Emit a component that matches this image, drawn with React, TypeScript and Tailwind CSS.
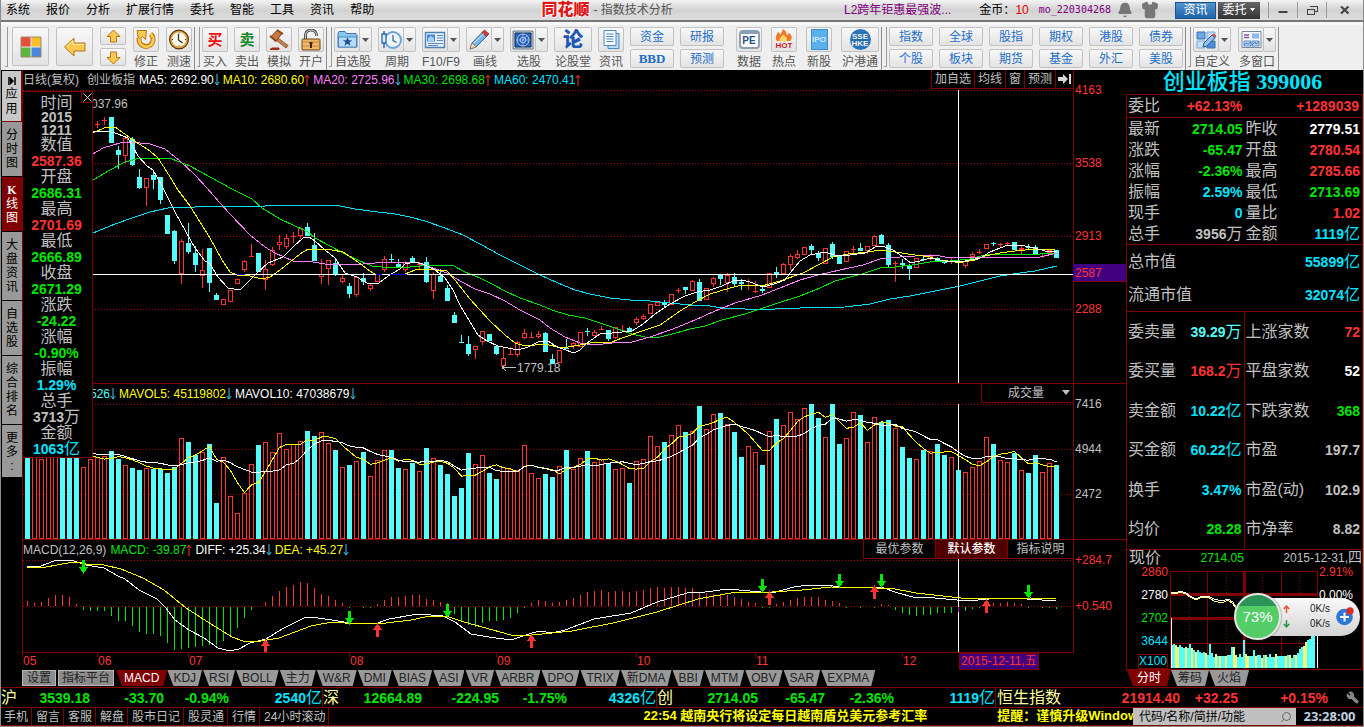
import React from "react";
import { Bell, Shirt, Wrench, Search } from "lucide-react";

const UP = "#ff3232";
const DOWN = "#54fcfc";
const GRID = "#a80000";

const STEP = 7;
const ORIGIN = 27.5;
const barX = (i: number) => ORIGIN + STEP * i;

type Candle = [number, number, number, number, number];

const FIRST_CANDLE = 10;
// rising flag, high, low, body top, body bottom
const candles: Candle[] = [
  [1, 121, 128, 124, 124], [1, 117, 125, 120, 120], [0, 117, 143, 117, 143], [0, 146, 169, 150, 155],
  [1, 137, 163, 138, 156], [0, 137, 166, 139, 165], [0, 169, 189, 177, 188], [1, 178, 206, 178, 188],
  [0, 170, 189, 175, 180], [0, 177, 204, 177, 200], [0, 215, 234, 215, 234], [0, 230, 264, 231, 261],
  [1, 239, 284, 241, 274], [0, 223, 254, 243, 252], [0, 246, 272, 253, 265], [1, 249, 288, 270, 276],
  [0, 248, 292, 248, 283], [0, 293, 300, 295, 300], [1, 299, 305, 299, 305], [1, 290, 302, 290, 302],
  [1, 279, 284, 279, 284], [1, 260, 272, 261, 270], [1, 244, 257, 256, 256], [0, 253, 272, 253, 272],
  [1, 260, 290, 269, 280], [1, 247, 266, 250, 265], [1, 235, 250, 242, 245], [1, 234, 249, 238, 247],
  [1, 232, 243, 236, 236], [1, 227, 239, 228, 236], [0, 223, 236, 227, 236], [0, 233, 261, 245, 261],
  [1, 259, 284, 274, 277], [1, 260, 285, 260, 269], [0, 258, 276, 263, 275], [1, 275, 283, 278, 282],
  [0, 283, 298, 286, 294], [1, 277, 297, 277, 295], [0, 273, 285, 278, 282], [1, 283, 291, 285, 289],
  [1, 274, 282, 274, 282], [1, 256, 272, 259, 270], [0, 254, 262, 259, 259], [0, 259, 268, 264, 267],
  [1, 261, 272, 262, 270], [0, 256, 263, 258, 262], [1, 262, 270, 264, 264], [0, 257, 283, 262, 282],
  [1, 272, 299, 274, 291], [0, 269, 282, 276, 282], [0, 285, 301, 288, 301], [0, 312, 323, 315, 323],
  [0, 335, 343, 342, 342], [0, 336, 356, 344, 354], [1, 346, 359, 346, 350], [1, 331, 345, 331, 342],
  [0, 334, 341, 334, 341], [0, 346, 355, 346, 354], [1, 347, 366, 358, 366], [1, 347, 354, 354, 354],
  [1, 341, 357, 342, 355], [1, 329, 339, 333, 338], [1, 332, 338, 337, 337], [1, 331, 338, 334, 337],
  [0, 332, 352, 333, 352], [0, 354, 364, 359, 364], [1, 350, 363, 350, 363], [0, 339, 349, 348, 348],
  [1, 342, 349, 343, 346], [1, 332, 347, 332, 347], [0, 328, 336, 331, 331], [1, 330, 336, 332, 336],
  [1, 326, 330, 329, 329], [0, 330, 341, 330, 339], [1, 327, 339, 327, 338], [1, 325, 331, 330, 330],
  [0, 327, 332, 328, 332], [1, 317, 325, 319, 323], [1, 314, 320, 316, 319], [1, 304, 314, 304, 314],
  [1, 302, 306, 302, 306], [0, 300, 307, 303, 305], [1, 294, 305, 294, 305], [1, 288, 293, 290, 290],
  [0, 287, 294, 287, 290], [1, 280, 291, 281, 291], [0, 279, 301, 282, 301], [1, 288, 300, 288, 300],
  [1, 277, 287, 278, 284], [0, 275, 285, 275, 279], [1, 273, 292, 275, 283], [0, 273, 286, 277, 284],
  [0, 279, 290, 282, 284], [1, 279, 290, 285, 285], [1, 281, 293, 291, 291], [0, 287, 293, 289, 291],
  [1, 273, 288, 273, 288], [0, 267, 278, 272, 274], [1, 263, 274, 264, 274], [1, 254, 270, 256, 265],
  [1, 250, 259, 254, 258], [1, 247, 255, 247, 255], [0, 244, 254, 246, 250], [0, 251, 261, 253, 258],
  [1, 248, 264, 248, 264], [0, 242, 259, 244, 257], [0, 255, 264, 256, 264], [1, 251, 262, 251, 262],
  [1, 246, 254, 249, 249], [0, 243, 251, 248, 251], [1, 246, 254, 246, 251], [1, 235, 246, 236, 246],
  [0, 234, 244, 235, 244], [0, 243, 267, 245, 265], [1, 261, 282, 263, 263], [0, 259, 269, 263, 265],
  [0, 264, 280, 266, 269], [1, 258, 268, 258, 268], [0, 256, 261, 259, 259], [1, 254, 260, 256, 259],
  [0, 257, 261, 258, 261], [0, 260, 264, 261, 263], [1, 257, 264, 261, 261], [0, 258, 264, 261, 261],
  [1, 261, 268, 261, 266], [1, 252, 257, 254, 257], [1, 249, 254, 252, 252], [1, 244, 249, 244, 249],
  [0, 242, 246, 243, 243], [1, 243, 247, 244, 244], [1, 242, 246, 243, 243], [0, 242, 250, 242, 250],
  [1, 246, 254, 248, 250], [0, 244, 249, 247, 247], [0, 245, 254, 247, 254], [1, 254, 258, 256, 256],
  [1, 250, 253, 250, 253], [0, 250, 258, 250, 258],
];

const priceLines = [
  { stroke: "#00e5ff", points: "93,233 115,224 135,217 150,212 168,208 195,207 215,206 245,207 265,206 295,205 315,205 340,206 355,209 370,211 395,214 410,217 425,221 445,228 463,235 480,244 500,255 520,265 540,275 558,283 575,290 590,294 610,298 630,300 650,301 670,303 690,305 710,306 722,308 745,309 775,309 800,308 845,307 870,304 890,299 910,296 935,291 960,286 980,281 1000,276 1020,273 1035,271 1057,266" },
  { stroke: "#00e600", points: "93,180 110,170 125,162 140,158 155,158 172,159 190,166 210,177 232,189 252,199 262,208 280,219 308,232 315,238 330,246 345,254 360,261 372,266 382,267 410,267 430,265 452,265 465,272 480,278 492,284 505,291 520,298 540,305 552,310 568,315 585,318 600,323 618,329 632,334 645,337 660,337 676,333 690,329 705,326 722,320 745,314 760,309 775,304 800,296 820,288 835,281 850,277 862,274 880,268 895,267 912,265 930,262 950,261 970,259 985,255 1020,254 1040,254 1057,253" },
  { stroke: "#ff80ff", points: "93,154 103,148 120,143 130,142 150,144 165,149 180,161 195,175 207,188 220,203 230,214 250,235 265,247 275,253 293,261 313,262 325,264 352,265 375,263 393,262 415,262 427,266 447,273 460,281 475,289 490,294 505,301 520,310 540,320 550,328 565,337 580,343 595,345 612,343 632,342 650,337 673,329 695,320 715,311 735,303 762,295 780,288 800,280 818,275 840,270 863,265 880,259 900,257 915,256 935,255 945,257 985,257 1010,257 1040,257 1057,253" },
  { stroke: "#ffff00", points: "93,133 106,127 115,127 133,140 150,151 158,158 167,172 178,190 190,206 200,222 210,238 222,260 230,272 237,275 250,276 262,279 270,277 280,270 290,262 300,254 308,249 332,250 343,252 355,260 370,271 376,275 405,274 415,270 423,269 447,271 455,280 470,299 490,321 505,335 515,343 525,346 545,344 562,348 580,345 590,343 612,342 622,338 645,330 660,325 670,318 680,311 695,302 710,294 730,288 742,285 762,286 780,281 803,273 820,264 833,257 848,254 868,252 880,250 895,252 915,255 930,257 940,260 955,262 963,262 975,260 985,256 1000,253 1015,251 1035,249 1055,249" },
  { stroke: "#ffffff", points: "93,131 108,131 118,134 128,138 138,156 147,166 153,170 162,186 175,212 185,230 195,248 205,261 210,264 218,277 228,288 240,290 247,283 257,273 268,263 283,257 294,246 303,238 309,237 315,241 325,250 335,258 345,273 357,277 367,283 379,283 388,276 400,269 405,264 415,262 423,264 435,270 445,278 453,290 460,305 470,322 478,335 487,341 498,346 508,348 518,350 528,347 540,341 548,341 557,347 563,349 574,353 580,350 587,343 600,334 612,333 632,331 643,324 655,314 670,304 685,296 697,292 710,290 722,286 733,281 742,280 750,282 763,287 774,284 785,280 790,273 800,261 810,255 825,252 838,256 850,255 865,253 877,246 882,246 893,250 903,257 911,263 920,261 930,258 945,261 960,262 970,260 980,258 990,252 1000,248 1008,245 1020,245 1035,248 1045,251 1057,252" },
];

// distance of each bar top below the panel's upper edge, in thirds of a unit
const volumeTops = [
  200, 215, 238, 215, 200, 195, 205, 225, 262, 238, 232, 229, 213, 237, 256, 264, 270, 265, 266, 268, 279, 260, 175, 186,
  225, 217, 192, 369, 232, 349, 400, 338, 253, 195, 187, 217, 160, 208, 193, 184, 153, 168, 157, 190, 210, 262, 255, 244,
  216, 289, 241, 211, 210, 264, 268, 249, 274, 204, 235, 255, 282, 348, 324, 219, 253, 226, 279, 297, 262, 268, 271, 196,
  280, 295, 282, 291, 259, 210, 268, 235, 213, 247, 238, 250, 268, 265, 309, 244, 238, 169, 199, 186, 166, 136, 156, 154,
  78, 148, 103, 99, 133, 156, 231, 199, 217, 255, 154, 117, 136, 97, 118, 85, 72, 114, 172, 72, 192, 175, 97, 105, 187,
  112, 126, 120, 145, 201, 234, 238, 210, 214, 192, 225, 232, 270, 277, 262, 244, 172, 192, 241, 247, 219, 271, 279, 225,
  277, 250, 255,
];
const fallingVolume = new Set([
  0, 5, 6, 7, 12, 13, 15, 16, 18, 19, 20, 21, 23, 24, 26, 27, 33, 40, 41, 44, 46, 48, 52, 53, 55, 57, 59, 60, 61, 62, 63,
  66, 67, 74, 75, 77, 80, 83, 86, 91, 94, 96, 99, 101, 102, 105, 107, 112, 113, 115, 116, 119, 122, 123, 125, 126, 128,
  130, 131, 133, 138, 141, 143, 144, 147,
]);

const volumeY = (v: number) => 380 + Math.round(v / 3);

function movingAverage(values: number[], span: number, from: number) {
  return values
    .map((_, i) => i)
    .filter((i) => i >= from)
    .map((i) => {
      const part = values.slice(i - span + 1, i + 1);
      const mean = part.reduce((a, b) => a + b, 0) / span;
      return `${barX(i)},${380 + mean / 3}`;
    })
    .join(" ");
}

const macdTips = [
  184, 189, 186, 173, 166, 166, 171, 192, 210, 212, 212, 212, 228, 243, 243, 258, 276, 282, 282, 288, 308, 330, 328, 324,
  321, 318, 314, 314, 303, 285, 263, 234, 210, 202, 186, 168, 153, 141, 136, 126, 129, 144, 162, 168, 180, 189, 204, 202,
  204, 204, 192, 180, 171, 170, 169, 166, 166, 177, 181, 186, 190, 222, 243, 256, 262, 249, 243, 243, 240, 234, 218, 204,
  189, 179, 183, 189, 185, 180, 174, 165, 156, 154, 151, 156, 154, 154, 156, 154, 150, 144, 141, 145, 141, 141, 144, 145,
  159, 160, 162, 162, 165, 172, 178, 186, 190, 203, 203, 192, 186, 180, 174, 171, 171, 172, 180, 183, 190, 203, 202, 203,
  202, 203, 192, 195, 210, 219, 225, 228, 224, 224, 219, 219, 219, 216, 212, 207, 204, 190, 190, 188, 186, 190, 193, 203,
  202, 203, 203, 208,
];

const diffLine =
  "27,567 41,566 54,561 71,560 86,565 104,568 118,576 125,579 139,590 157,599 166,608 175,620 189,630 204,638 218,648 230,651 239,649 250,643 266,639 282,629 304,618 311,617 332,620 350,623 375,624 389,619 418,614 443,616 455,622 471,634 489,637 511,640 529,634 539,631 552,633 565,630 594,619 631,613 657,602 687,593 705,592 728,589 761,592 776,592 794,587 809,585 827,585 839,587 881,587 898,593 913,597 935,598 957,600 966,601 1001,598 1027,599 1056,601";
const deaLine =
  "27,567 46,567 68,563 77,562 86,564 104,565 121,569 143,578 164,590 186,608 211,624 232,637 243,641 261,641 279,638 311,626 332,622 357,624 386,623 411,620 425,617 446,616 464,622 511,635 532,635 552,633 572,631 613,623 657,612 698,599 731,593 772,592 802,590 831,587 876,588 890,588 916,593 961,598 983,599 1031,598 1056,599";

const sellMarks = [[83, 560], [349, 611], [447, 604], [762, 579], [839, 574], [881, 574], [1028, 585]];
const buyMarks = [[265, 639], [377, 623], [531, 634], [769, 591], [874, 585], [986, 599]];

function Trend({ up }: { up?: boolean }) {
  return up ? (
    <svg className="mr-[3px] h-3 w-1.5 shrink-0" viewBox="0 0 6 12" stroke="#ff3232" fill="none">
      <path d="M3 12V1.500M.8 4L3 1.200L5.200 4" />
    </svg>
  ) : (
    <svg className="mr-[3px] h-3 w-1.5 shrink-0" viewBox="0 0 6 12" stroke="#3cc8f0" fill="none">
      <path d="M3 0V10.500M.8 8L3 11L5.200 8" />
    </svg>
  );
}

function PriceChart() {
  return (
    <svg className="block h-[293px] w-full" viewBox="23 90 1050 293" preserveAspectRatio="none" shapeRendering="crispEdges">
      {[90.5, 163.5, 236.5, 309.5].map((y) => (
        <line key={y} x1="23" x2="1073" y1={y} y2={y} stroke={GRID} strokeDasharray="1 2" />
      ))}
      {candles.map(([rise, high, low, top, bottom], k) => {
        const x = barX(k + FIRST_CANDLE);
        const color = rise ? UP : DOWN;
        return (
          <g key={k} stroke={color}>
            <line x1={x} x2={x} y1={high} y2={low} />
            {top === bottom ? (
              <line x1={x - 2.5} x2={x + 2.5} y1={top + 0.5} y2={top + 0.5} />
            ) : rise ? (
              <rect x={x - 2} y={top + 0.5} width="4" height={bottom - top - 1} fill="#000" />
            ) : (
              <rect x={x - 2.5} y={top} width="5" height={bottom - top} fill={color} stroke="none" />
            )}
          </g>
        );
      })}
      {priceLines.map((l) => (
        <polyline key={l.stroke} points={l.points} fill="none" stroke={l.stroke} />
      ))}
      <path d="M93 274.500H1073M958.500 90V383" stroke="#fff" />
      <path d="M237 274.500H245M376 274.500H382M390 274.500H407" stroke="#0000ff" />
      <path d="M502 367.500H516M502 367.500l4 -3M502 367.500l4 3" stroke="#c0c0c0" fill="none" />
    </svg>
  );
}

function VolumeChart() {
  return (
    <svg className="block h-[135px] w-full" viewBox="23 404 1050 135" preserveAspectRatio="none" shapeRendering="crispEdges">
      {[404.5, 449.5, 494.5].map((y) => (
        <line key={y} x1="23" x2="1073" y1={y} y2={y} stroke={GRID} strokeDasharray="1 2" />
      ))}
      <line x1="958.5" x2="958.5" y1="404" y2="470" stroke="#fff" />
      {volumeTops.map((v, i) => {
        const y = volumeY(v);
        return fallingVolume.has(i) ? (
          <rect key={i} x={barX(i) - 2.5} y={y} width="5" height={539 - y} fill={DOWN} />
        ) : (
          <rect key={i} x={barX(i) - 2} y={y + 0.5} width="4" height={538 - y} fill="#000" stroke={UP} />
        );
      })}
      <polyline points={movingAverage(volumeTops, 5, 9)} fill="none" stroke="#ffff00" />
      <polyline points={movingAverage(volumeTops, 10, 9)} fill="none" stroke="#ffffff" />
    </svg>
  );
}

function MacdChart() {
  return (
    <svg className="block h-[93px] w-full" viewBox="23 559 1050 93" preserveAspectRatio="none" shapeRendering="crispEdges">
      {[560.5, 606.5].map((y) => (
        <line key={y} x1="23" x2="1073" y1={y} y2={y} stroke={GRID} strokeDasharray="1 2" />
      ))}
      {macdTips.map((v, i) => (
        <line
          key={i}
          x1={barX(i)}
          x2={barX(i)}
          y1={v < 200 ? 606 : 607}
          y2={540 + Math.round(v / 3)}
          stroke={v < 200 ? UP : "#00e600"}
        />
      ))}
      <polyline points={diffLine} fill="none" stroke="#fff" />
      <polyline points={deaLine} fill="none" stroke="#ff0" />
      <path d="M958.500 559V652" stroke="#fff" />
      <path d="M958.500 607V612" stroke="#c000c0" />
      {sellMarks.map(([x, y]) => (
        <path key={x} d={`M${x - 1} ${y}h3v7h3l-4.500 7l-4.500 -7h3z`} fill="#00e600" />
      ))}
      {buyMarks.map(([x, y]) => (
        <path key={x} d={`M${x + 0.5} ${y}l4.500 7h-3v7h-3v-7h-3z`} fill="#ff3232" />
      ))}
    </svg>
  );
}

/* ---------- toolbar icons ---------- */

const icons: Record<string, React.ReactNode> = {
  windows: (
    <svg className="size-[22px]" viewBox="0 0 22 22">
      <path d="M1 1h9.500v9.500H1z" fill="#e84c3d" /><path d="M11.500 1H21v9.500h-9.500z" fill="#f6c02c" />
      <path d="M1 11.500h9.500V21H1z" fill="#5cb83c" /><path d="M11.500 11.500H21V21h-9.500z" fill="#4a86dc" />
      <path d="M1 1h20v20H1z" fill="none" stroke="#a08870" />
    </svg>
  ),
  left: (
    <svg className="size-6" viewBox="0 0 24 24">
      <path d="M1.500 12L11 3v5h11v8H11v5z" fill="#fbc94e" stroke="#b87418" />
      <path d="M4 11.500L10 6v3.500h11" fill="none" stroke="#fff0b8" />
    </svg>
  ),
  up: <svg className="size-[15px]" viewBox="0 0 15 15"><path d="M7.500 1L14 7.500h-3.500V13h-6V7.500H1z" fill="#fbc94e" stroke="#b87418" /></svg>,
  down: <svg className="size-[15px]" viewBox="0 0 15 15"><path d="M7.500 14L14 7.500h-3.500V2h-6v5.500H1z" fill="#fbc94e" stroke="#b87418" /></svg>,
  redo: (
    <svg className="size-[22px]" viewBox="0 0 22 22" fill="none">
      <path d="M15.500 5a7 7 0 1 1 -11.300 4" stroke="#b87418" strokeWidth="5" />
      <path d="M2 1.500h9.500l-1 9l-3 -3l-4 3z" fill="#fbc94e" stroke="#b87418" />
      <path d="M15.300 5a7 7 0 1 1 -11 4.500" stroke="#fbc94e" strokeWidth="3" />
    </svg>
  ),
  clock: (
    <svg className="size-[22px]" viewBox="0 0 22 22">
      <circle cx="11" cy="10.500" r="9" fill="#fff8e8" stroke="#5a3410" strokeWidth="2" />
      <circle cx="11" cy="10.500" r="8" fill="none" stroke="#e0a040" strokeWidth="1.600" />
      <path d="M10.500 5v6l4 3" fill="none" stroke="#333" strokeWidth="1.300" />
      <path d="M11 3.500v1M11 16.500v1M4 10.500h1M17 10.500h1" stroke="#333" />
    </svg>
  ),
  gavel: (
    <svg className="size-[22px]" viewBox="0 0 22 22">
      <path d="M10 9l10 7.500l-2 2.500l-10 -8z" fill="#c98450" stroke="#7a4018" strokeWidth=".8" />
      <path d="M3 7.500L9.500 1l4.500 3.500L8 12z" fill="#c87840" stroke="#7a4018" />
      <path d="M2 7l6.500 5.500M9 1l6 4" stroke="#8c4a1c" strokeWidth="2" />
      <path d="M2 20.500h9v-1.500H4z" fill="#a02c18" stroke="#a02c18" />
    </svg>
  ),
  lock: (
    <svg className="size-[22px]" viewBox="0 0 22 22">
      <path d="M5.500 10V6a5.500 5 0 0 1 11 0v1" fill="none" stroke="#555" strokeWidth="3" />
      <path d="M5.500 10V6a5.500 5 0 0 1 11 0v1" fill="none" stroke="#c8c8c8" strokeWidth="1" />
      <rect x="2" y="10" width="18" height="11" rx="1" fill="#f0b868" stroke="#6b4218" />
      <path d="M3 13h16M3 17h16" stroke="#c88838" />
      <path d="M11 13v6M9.500 14h3" stroke="#402808" strokeWidth="2" />
    </svg>
  ),
  folder: (
    <svg className="size-[21px]" viewBox="0 0 21 21">
      <path d="M1 18V4l1 -1.500h6l1.500 2H19L20 6v12z" fill="#8cc4f0" stroke="#3878b8" />
      <path d="M1.500 8H19.500v10h-18z" fill="#b4dcf8" stroke="#3878b8" strokeWidth=".8" />
      <path d="M10.500 8l1.300 3.200h3.400l-2.700 2.100 1 3.400 -3 -2 -3 2 1 -3.400 -2.700 -2.100h3.400z" fill="#205090" />
    </svg>
  ),
  period: (
    <svg className="size-[22px]" viewBox="0 0 22 22">
      <circle cx="13" cy="11" r="8" fill="#eef6fc" stroke="#6ca4dc" strokeWidth="2" />
      <path d="M13 6v5.500l3.500 2" fill="none" stroke="#3468a0" strokeWidth="1.300" />
      <path d="M4 2v17" stroke="#2c68b0" strokeWidth="1.500" /><path d="M2 5h4v9H2z" fill="#d8ecfc" stroke="#2c68b0" strokeWidth="1.300" />
    </svg>
  ),
  news: (
    <svg className="size-[22px]" viewBox="0 0 22 22">
      <path d="M1.500 3.500h19v15h-19z" fill="#e8f2fc" stroke="#4c80b8" strokeWidth="1.400" />
      <path d="M3 5.500h8v7H3z" fill="#4888d0" /><path d="M4 9l3 -2 3 2v3H4z" fill="#a8d0f4" />
      <path d="M13 6.500h6M13 9h6M13 11.500h6M4 14.500h15M4 16.500h10" stroke="#5c88b8" />
    </svg>
  ),
  pencil: (
    <svg className="size-[22px]" viewBox="0 0 22 22">
      <path d="M2 20l2 -6L15 2.500l4.500 4L8 18z" fill="#78b4ec" stroke="#446890" />
      <path d="M14 3.500l2.500 -2.500 4.500 4 -2.500 2.500z" fill="#d03c34" stroke="#8c2420" strokeWidth=".7" />
      <path d="M2 20l2 -6 4 4z" fill="#f4d8b0" stroke="#906840" strokeWidth=".6" /><path d="M6 14L15.500 5" stroke="#d8ecfc" />
    </svg>
  ),
  radar: (
    <svg className="size-[22px]" viewBox="0 0 22 22">
      <path d="M1 2h20v18H1z" fill="#bcd0e8" stroke="#707880" /><path d="M3 4h16v14H3z" fill="#2c62b4" stroke="#16305c" />
      <circle cx="11" cy="11" r="6" fill="none" stroke="#a8ccf8" /><circle cx="11" cy="11" r="2.800" fill="none" stroke="#a8ccf8" />
      <path d="M11 4.500v13M4 11h14M11 11l4.500 -4.500" stroke="#90b8f0" strokeWidth=".8" />
    </svg>
  ),
  doc: (
    <svg className="size-[21px]" viewBox="0 0 21 21">
      <path d="M7 4.500h11v15H7z" fill="#bcdcf4" stroke="#5088c0" /><path d="M3 1.500h12v15H3z" fill="#f4faff" stroke="#5088c0" />
      <path d="M5.500 5h7M5.500 7.500h7M5.500 10h7M5.500 12.500h7" stroke="#4c8ccc" />
    </svg>
  ),
  pe: (
    <span className="flex h-[19px] w-[21px] items-end justify-center rounded-sm border-2 border-t-4 border-[#8ca0b4] bg-white text-[10px] leading-[13px] font-bold text-[#2c5080]">PE</span>
  ),
  hot: (
    <span className="flex flex-col items-center">
      <svg className="h-[13px] w-5" viewBox="0 0 20 13">
        <path d="M3 12C0 8 3 6 4 3c2 1 2 2 2 3C7 4 9 2 8.500 0C13 2 12 4 13 6c1 0 1.500 -1 1.500 -2.500C18 6 19 9 16 12z" fill="#f07828" />
        <path d="M6 12.500c-1.500 -3 1 -4 3 -7c3 2 5 4 3.500 7z" fill="#ffd868" />
      </svg>
      <span className="text-[8px] leading-[8px] font-black text-[#d01828]">HOT</span>
    </span>
  ),
  ipo: (
    <span className="flex h-[19px] w-[15px] items-center justify-center bg-[#5ab0ec] text-[8px] leading-none text-white outline outline-[#3c90d0]">IPO</span>
  ),
  hk: (
    <span className="flex size-[21px] items-center justify-center rounded-full bg-[#2878c0] text-[8px] leading-[7px] font-bold text-white [text-shadow:0_0_2px_#103c68]">
      <span className="-mx-1 text-center">SSE<br />HKE</span>
    </span>
  ),
  custom: (
    <svg className="size-[22px]" viewBox="0 0 22 22">
      <path d="M2 3h8v7H2z" fill="#6ca8e8" stroke="#3870b0" /><path d="M12 3h8v7h-8zM2 12h8v7H2z" fill="#c4e0f8" stroke="#78a8d8" />
      <path d="M12 12h8v7h-8z" fill="#4c8cd8" stroke="#3870b0" />
      <path d="M8 18l1 -4L17 6l3 2.500L12 17z" fill="#8cc4f4" stroke="#345880" /><path d="M17 6l1.500 -1.500 3 2.500L20 8.500z" fill="#d84838" />
    </svg>
  ),
  multi: (
    <svg className="size-[21px]" viewBox="0 0 21 21">
      <path d="M1 2.500h19v16H1z" fill="#f0f6fc" stroke="#7888a0" />
      <path d="M3 6h5M3 8.500h5" stroke="#8858a0" strokeWidth="1.400" /><path d="M11 4.500h7v5h-7z" fill="#90b8e8" />
      <path d="M3 12h7v5H3zM11 12h7v5h-7z" fill="#b8d4f4" stroke="#4878b8" strokeWidth=".8" /><path d="M3 16l2 -2 2 1 3 -2M11 16l3 -3 1 2 3 -2" stroke="#4878b8" fill="none" />
    </svg>
  ),
};

const face = "flex items-center justify-center rounded-xs border border-[#c2c2c2] bg-linear-to-b from-[#f8f8f8] to-[#e3e3e3]";

function Tool({ icon, label, wide, menu }: { icon: React.ReactNode; label: string; wide?: boolean; menu?: boolean }) {
  return (
    <div className={wide || menu ? "flex w-[38px] flex-col items-center" : "flex w-[26px] flex-col items-center"}>
      <div className="flex w-full">
        <button aria-label={label} className={`${face} h-[25px] min-w-0 flex-1 overflow-hidden`}>{icon}</button>
        {menu && (
          <button aria-label={`${label}菜单`} className={`${face} -ml-px h-[25px] w-[13px]`}>
            <svg className="h-1 w-[7px]" viewBox="0 0 7 4"><path d="M0 0h7L3.500 4z" fill="#555" /></svg>
          </button>
        )}
      </div>
      <span className="mt-0.5 text-xs leading-4 whitespace-nowrap text-[#555]">{label}</span>
    </div>
  );
}

function Pair({ top, bottom }: { top: React.ReactNode; bottom: React.ReactNode }) {
  return (
    <div className="flex w-11 flex-col gap-[3px] text-xs text-[#1e6ec8]">
      <button className={`${face} h-[19px]`}>{top}</button>
      <button className={`${face} h-[19px]`}>{bottom}</button>
    </div>
  );
}

function Divider() {
  return (
    <div className="flex w-2.5 justify-between pr-0.5 pl-0.5">
      <span className="h-11 w-px bg-[#8e8e8e]" />
      <span className="h-10 w-[3px] border-r border-b border-[#999]" />
    </div>
  );
}

const glyph = "text-[15px] leading-none font-bold";

/* ---------- quote panel ---------- */

const tone: Record<string, string> = {
  r: "text-[#ff3232]",
  g: "text-[#00e600]",
  c: "text-[#00e5ff]",
  a: "text-[#54fcfc]",
  w: "text-white",
  s: "text-[#c0c0c0]",
};

function Num({ t, v, unit }: { t: string; v: string; unit?: string }) {
  return (
    <span className={`${tone[t]} flex items-center justify-end whitespace-nowrap`}>
      <b className="text-sm leading-4">{v}</b>
      {unit && <span className="text-base leading-4">{unit}</span>}
    </span>
  );
}

function Cell({ label, children }: { label: string; children: React.ReactNode }) {
  return (
    <div className="flex items-center justify-between pr-0.5 pl-px">
      <span className="text-base leading-4 whitespace-nowrap text-[#c0c0c0]">{label}</span>
      {children}
    </div>
  );
}

const quoteRows: [string, string, string, string?][] = [
  ["最新", "g", "2714.05"], ["昨收", "w", "2779.51"],
  ["涨跌", "g", "-65.47"], ["开盘", "r", "2780.54"],
  ["涨幅", "g", "-2.36%"], ["最高", "r", "2785.66"],
  ["振幅", "c", "2.59%"], ["最低", "g", "2713.69"],
  ["现手", "c", "0"], ["量比", "r", "1.02"],
  ["总手", "s", "3956", "万"], ["金额", "c", "1119", "亿"],
];
const statLeft: [string, string, string, string?][] = [
  ["委卖量", "a", "39.29", "万"], ["委买量", "r", "168.2", "万"], ["卖金额", "c", "10.22", "亿"],
  ["买金额", "c", "60.22", "亿"], ["换手", "c", "3.47%"], ["均价", "g", "28.28"],
];
const statRight: [string, string, string, string?][] = [
  ["上涨家数", "r", "72"], ["平盘家数", "w", "52"], ["下跌家数", "g", "368"],
  ["市盈", "s", "197.7"], ["市盈(动)", "s", "102.9"], ["市净率", "s", "8.82"],
];

const intradayVolume = Array.from({ length: 72 }, (_, i) => {
  const base = i < 20 ? 23 - i * 0.55 : i < 62 ? 10 + ((i * 7) % 5) * 0.6 : 10 + (i - 61) * 2.4;
  const spike = i === 9 ? 6 : i === 19 ? 9 : i === 20 ? 4 : i === 30 ? 11 : i === 31 ? 8 : i === 36 ? 17 : i === 41 ? 6 : 0;
  return Math.round(base + spike + ((i * 5) % 3));
});

function IntradayChart() {
  return (
    <svg className="mt-1 block h-[99px] w-[148px]" viewBox="1170 570 148 99" shapeRendering="crispEdges">
      <path d="M1170.500 571.500H1317.500V669M1170.500 571V669M1207.500 571V669M1281.500 571V669M1170 643.500H1317" stroke="#800000" fill="none" />
      <path d="M1170 594.500H1317M1170 618.500H1317M1244.500 571V669" stroke="#800000" strokeWidth="3" />
      <path d="M1189.500 571V669M1226.500 571V669M1262.500 571V669M1299.500 571V669" stroke="#800000" strokeDasharray="1 2" />
      {intradayVolume.map((h, i) => (
        <rect key={i} x={1171 + i * 2} y={668 - h} width="2" height={h} fill={i % 5 === 2 || i % 7 === 3 ? "#f8f878" : "#54fcfc"} />
      ))}
      <path d="M1171.500 618V668M1317.500 635V668" stroke="#fff" />
      <polyline points="1171,593 1176,594 1180,592 1186,594 1190,597 1196,600 1200,598 1208,597 1214,601 1222,603 1228,600 1233,604 1236,608" stroke="#ffff80" fill="none" />
      <polyline points="1171,592 1176,593 1180,591 1186,593 1190,596 1196,599 1200,597 1208,596 1214,599 1222,601 1228,599 1233,602 1236,607" stroke="#fff" fill="none" />
    </svg>
  );
}

const panelRows: [string, string, string, string?][] = [
  ["数值", "r", "2587.36"], ["开盘", "g", "2686.31"], ["最高", "r", "2701.69"], ["最低", "g", "2666.89"],
  ["收盘", "g", "2671.29"], ["涨跌", "g", "-24.22"], ["涨幅", "g", "-0.90%"], ["振幅", "c", "1.29%"],
  ["总手", "s", "3713", "万"], ["金额", "c", "1063", "亿"],
];

const indicatorTabs = ["KDJ", "RSI", "BOLL", "主力", "W&R", "DMI", "BIAS", "ASI", "VR", "ARBR", "DPO", "TRIX", "新DMA", "BBI", "MTM", "OBV", "SAR", "EXPMA"];
const tabShape = "h-4 text-xs leading-4 [clip-path:polygon(0_0,100%_0,calc(100%-4px)_100%,6px_100%)]";

const red = "border-[#800000]";

export default function App() {
  return (
    <div className="flex min-h-screen flex-col border-r border-b border-l border-[#8c8c8c] bg-black font-['Liberation_Sans','Noto_Sans_CJK_SC',sans-serif] text-xs">
      <header>
        <div className="flex h-[22px] items-center justify-between border-b-2 border-[#777] bg-linear-to-b from-[#f4f4f4] via-[#d2d2d2] to-[#dedede] leading-5">
          <nav className="flex gap-4 pl-[5px] text-black">
            {["系统", "报价", "分析", "扩展行情", "委托", "智能", "工具", "资讯", "帮助"].map((m) => (
              <button key={m} className="whitespace-nowrap">{m}</button>
            ))}
          </nav>
          <h1 className="flex items-center gap-1 pr-1 text-[#555]">
            <span className="text-base leading-5 font-black text-[#e01818] [text-shadow:1px_0_#fff,-1px_0_#fff,0_1px_#fff,0_-1px_#fff]">同花顺</span>
            <span>- 指数技术分析</span>
          </h1>
          <div className="flex items-center whitespace-nowrap">
            <a href="#promo" className="text-[#800080]">L2跨年钜惠最强波...</a>
            <span className="ml-7 text-black">金币：</span>
            <span className="text-[#e00000]">10</span>
            <span className="ml-2.5 font-['DejaVu_Sans_Mono',monospace] text-[10px] text-[#800080]">mo_220304268</span>
            <Bell className="ml-1.5 size-4 fill-[#777] text-[#777]" />
            <Shirt className="ml-2 size-[18px] fill-[#777] text-[#777]" />
            <button className="ml-4 h-[17px] w-[41px] border border-[#1c5490] bg-linear-to-b from-[#5494cc] to-[#1c64a8] leading-[15px] text-white">资讯</button>
            <button className="ml-0.5 flex h-[17px] w-[42px] items-center justify-center gap-1 bg-linear-to-b from-[#666] to-[#333] leading-[17px] text-white">
              委托
              <svg className="h-1 w-[5px]" viewBox="0 0 5 4"><path d="M0 0h5L2.500 3.500z" fill="#fff" /></svg>
            </button>
            <div className="ml-2 flex h-4 text-[#444]">
              <button aria-label="最小化" className="flex w-[29px] items-center justify-center border-l border-[#999]">
                <svg className="size-3" viewBox="0 0 12 12"><path d="M1.500 8h9" stroke="currentColor" strokeWidth="2" /></svg>
              </button>
              <button aria-label="还原" className="flex w-[29px] items-center justify-center border-l border-[#999]">
                <svg className="size-3" viewBox="0 0 12 12" fill="none" stroke="currentColor" shapeRendering="crispEdges"><path d="M4 3V2.500h7.500v5H9M1 5.500h7v4.500H1z" /></svg>
              </button>
              <button aria-label="关闭" className="flex w-[37px] items-center justify-center border-l border-[#999]">
                <svg className="size-3" viewBox="0 0 12 12"><path d="M2 2.500l7.500 7M9.500 2.500l-7.500 7" stroke="currentColor" strokeWidth="2.200" /></svg>
              </button>
            </div>
          </div>
        </div>

        <div className="flex h-12 items-start overflow-hidden border-t-[3px] border-[#f8f8f8] bg-[#efefef] pt-0.5">
          <span className="ml-1 h-10 w-[3px] border-r border-b border-[#999]" />
          <div className="ml-1 flex gap-[7px]">
            <button aria-label="首页" className={`${face} h-[39px] w-[37px]`}>{icons.windows}</button>
            <button aria-label="后退" className={`${face} h-[39px] w-[37px]`}>{icons.left}</button>
            <div className="flex w-[26px] flex-col gap-[3px]">
              <button aria-label="上移" className={`${face} h-[18px]`}>{icons.up}</button>
              <button aria-label="下移" className={`${face} h-[18px]`}>{icons.down}</button>
            </div>
            <Tool icon={icons.redo} label="修正" />
            <Tool icon={icons.clock} label="测速" />
          </div>
          <Divider />
          <div className="flex gap-1.5">
            <Tool icon={<span className={`${glyph} text-[#f01010]`}>买</span>} label="买入" />
            <Tool icon={<span className={`${glyph} text-[#108828]`}>卖</span>} label="卖出" />
            <Tool icon={icons.gavel} label="模拟" />
            <Tool icon={icons.lock} label="开户" />
          </div>
          <Divider />
          <div className="flex gap-1.5">
            <Tool icon={icons.folder} label="自选股" menu />
            <Tool icon={icons.period} label="周期" menu />
            <Tool icon={icons.news} label="F10/F9" menu />
            <Tool icon={icons.pencil} label="画线" menu />
            <Tool icon={icons.radar} label="选股" menu />
            <Tool icon={<span className="text-xl leading-none font-black text-[#2058b0]">论</span>} label="论股堂" wide />
            <Tool icon={icons.doc} label="资讯" />
            <Pair top="资金" bottom={<b className="font-['Liberation_Serif',serif] text-[13px]">BBD</b>} />
            <Pair top="研报" bottom="预测" />
          </div>
          <div className="ml-3 flex gap-[9px]">
            <Tool icon={icons.pe} label="数据" />
            <Tool icon={icons.hot} label="热点" />
            <Tool icon={icons.ipo} label="新股" />
            <Tool icon={icons.hk} label="沪港通" wide />
          </div>
          <Divider />
          <div className="flex gap-1.5">
            <Pair top="指数" bottom="个股" />
            <Pair top="全球" bottom="板块" />
            <Pair top="股指" bottom="期货" />
            <Pair top="期权" bottom="基金" />
            <Pair top="港股" bottom="外汇" />
            <Pair top="债券" bottom="美股" />
          </div>
          <Divider />
          <div className="flex gap-[7px]">
            <Tool icon={icons.custom} label="自定义" menu />
            <Tool icon={icons.multi} label="多窗口" menu />
          </div>
          <span className="ml-0.5 h-11 w-px bg-[#8e8e8e]" />
        </div>
      </header>

      <main className="flex">
        <nav className="flex w-[21px] shrink-0 flex-col pt-px pl-px text-black">
          <button className={`flex h-[51px] flex-col items-center border-r border-b bg-[#c8c8c8] pt-1.5 leading-[15px] ${red}`}>
            <svg className="mb-0.5 h-2 w-2 shrink-0" viewBox="0 0 8 8"><path d="M1 0v8M7 0v8" stroke="#000" strokeWidth="1.500" /><path d="M2 0l4 4l-4 4z" /></svg>
            <span className="w-3">应用</span>
          </button>
          <button className="flex justify-center border-b border-black bg-[#999] py-1.5 leading-[14px]"><span className="w-3">分时图</span></button>
          <button className="flex justify-center border-b border-black bg-[#800000] py-1.5 leading-[14px] text-white">
            <span className="w-3"><b className="font-['Liberation_Serif',serif]">K</b>线图</span>
          </button>
          {["大盘资讯", "自选股", "综合排名"].map((t) => (
            <button key={t} className="flex justify-center border-b border-black bg-[#999] py-1.5 leading-[14px]"><span className="w-3">{t}</span></button>
          ))}
          <button className="flex justify-center bg-[#999] pt-1.5 pb-1 leading-[14px]">
            <span className="w-3">更多 :</span>
          </button>
        </nav>

        <div className="min-w-0 flex-1">
          <section className="relative flex">
            <div className={`min-w-0 flex-1 border-l ${red}`}>
              <div className="flex h-5 items-center justify-between whitespace-nowrap">
                <div className="flex items-center">
                  <span className="text-[#c0c0c0]">日线(复权)</span>
                  <span className="mr-1 ml-2 text-[#c0c0c0]">创业板指</span>
                  <span className="text-white">MA5: 2692.90</span><Trend />
                  <span className="text-[#ffff00]">MA10: 2680.60</span><Trend up />
                  <span className="text-[#ff80ff]">MA20: 2725.96</span><Trend />
                  <span className="text-[#00e600]">MA30: 2698.68</span><Trend up />
                  <span className="text-[#00e5ff]">MA60: 2470.41</span><Trend up />
                </div>
                <div className={`flex h-[19px] self-start border-b text-[#c0c0c0] ${red}`}>
                  {["加自选", "均线", "窗", "预测"].map((t) => (
                    <button key={t} className={`border-l px-[3px] ${red}`}>{t}</button>
                  ))}
                  <button aria-label="展开" className={`flex w-[18px] items-center justify-center border-l ${red}`}>
                    <svg className="h-3 w-[13px]" viewBox="0 0 13 12" fill="#d8d8d8"><path d="M0 4h5V1l5 5l-5 5V8H0zM11 1h2v10h-2z" /></svg>
                  </button>
                </div>
              </div>
              <PriceChart />
            </div>
            <div className={`flex w-[53px] shrink-0 flex-col gap-[53px] border-l pt-2.5 pl-px leading-5 text-[#ff3232] ${red}`}>
              <span>4163</span><span>3538</span><span>2913</span><span>2288</span>
            </div>
            <span className="absolute top-[194px] right-0 h-[18px] w-[53px] border-b border-[#800000] bg-[#400080] pl-0.5 leading-[18px] text-[#ff3232]">2587</span>
            <span className="absolute top-6 left-[69px] leading-5 text-[#c0c0c0]">037.96</span>
            <span className="absolute top-[288px] left-[495px] leading-5 text-[#c0c0c0]">1779.18</span>

            <div className={`absolute top-[21px] left-0 z-10 flex h-[367px] w-[71px] flex-col items-center border bg-black pt-[3px] pr-0.5 ${red}`}>
              <button aria-label="关闭" className={`absolute top-0 right-0 flex size-[11px] items-center justify-center border-b border-l ${red}`}>
                <svg className="size-[9px]" viewBox="0 0 9 9" stroke="#d0d0d0"><path d="M.5.5l8 8M8.500.5l-8 8" /></svg>
              </button>
              <span className="text-base leading-4 text-[#c0c0c0]">时间</span>
              <b className="w-8 text-center text-sm leading-[13px] text-[#c0c0c0]">2015 1211</b>
              {panelRows.map(([label, t, v, unit]) => (
                <React.Fragment key={label}>
                  <span className="text-base leading-4 text-[#c0c0c0]">{label}</span>
                  <Num t={t} v={v} unit={unit} />
                </React.Fragment>
              ))}
            </div>
          </section>

          <section className={`flex border-t ${red}`}>
            <div className={`min-w-0 flex-1 border-l ${red}`}>
              <div className="flex h-5 items-center justify-between whitespace-nowrap">
                <div className="flex items-center pl-[67px]">
                  <span className="text-[#54fcfc]">526</span><Trend />
                  <span className="text-[#ffff00]">MAVOL5: 45119802</span><Trend />
                  <span className="text-white">MAVOL10: 47038679</span><Trend />
                </div>
                <label className={`relative flex h-[19px] w-[92px] self-start border-b border-l ${red}`}>
                  <select aria-label="副图指标" className="w-full appearance-none bg-black pl-[26px] text-xs text-[#c0c0c0]">
                    <option>成交量</option>
                  </select>
                  <svg className="pointer-events-none absolute top-1.5 right-[3px] h-[5px] w-2" viewBox="0 0 8 5"><path d="M0 0h8L4 5z" fill="#c0c0c0" /></svg>
                </label>
              </div>
              <VolumeChart />
            </div>
            <div className={`flex w-[53px] shrink-0 flex-col gap-[25px] border-l pt-2.5 pl-px leading-5 text-[#c0c0c0] ${red}`}>
              <span>7416</span><span>4944</span><span>2472</span>
            </div>
          </section>

          <section className={`flex border-t ${red}`}>
            <div className={`min-w-0 flex-1 border-b border-l ${red}`}>
              <div className="flex h-[19px] items-center justify-between whitespace-nowrap">
                <div className="flex items-center">
                  <span className="mr-1 text-[#c0c0c0]">MACD(12,26,9)</span>
                  <span className="text-[#00e600]">MACD: -39.87</span><Trend up />
                  <span className="text-white">DIFF: +25.34</span><Trend />
                  <span className="text-[#ffff00]">DEA: +45.27</span><Trend />
                </div>
                <div className={`flex h-[19px] border-b text-[#c0c0c0] ${red}`}>
                  <button className={`w-[72px] border-l ${red}`}>最优参数</button>
                  <button className={`w-[72px] border-l bg-[#500000] font-medium text-white ${red}`}>默认参数</button>
                  <button className={`w-[66px] border-l ${red}`}>指标说明</button>
                </div>
              </div>
              <MacdChart />
            </div>
            <div className={`flex w-[53px] shrink-0 flex-col gap-[26px] border-l pt-2.5 pl-px leading-5 text-[#ff3232] ${red}`}>
              <span>+284.7</span><span>+0.540</span>
            </div>
          </section>

          <div className="grid h-[17px] grid-cols-[75fr_91fr_161fr_147fr_140fr_119fr_147fr_57fr_167fr] leading-4 text-[#ff3232]">
            {["05", "06", "07", "08", "09", "10", "11", "12"].map((m) => (
              <div key={m} className="flex"><span className="h-1 w-px bg-[#800000]" /><span>{m}</span></div>
            ))}
            <div><span className="inline-block h-[17px] border border-[#800000] bg-[#400080] px-px leading-[15px] whitespace-nowrap">2015-12-11,五</span></div>
          </div>

          <div className="flex h-[17px] overflow-hidden whitespace-nowrap text-[#222]">
            <button className="h-4 border border-[#b8b8b8] bg-[#8c8c8c] px-1 leading-[14px]">设置</button>
            <button className="ml-0.5 h-4 border border-[#b8b8b8] bg-[#8c8c8c] px-[3px] leading-[14px]">指标平台</button>
            <button className={`${tabShape} ml-0.5 bg-[#800000] px-2 text-white`}>MACD</button>
            <div className="flex gap-px">
              {indicatorTabs.map((t) => (
                <button key={t} className={`${tabShape} bg-[#999] px-1.5`}>{t}</button>
              ))}
            </div>
          </div>
        </div>

        <aside className="relative flex w-[237px] shrink-0 flex-col">
          <h2 className="h-6 pr-1 text-center font-['Liberation_Serif','Noto_Sans_CJK_SC',serif] text-[22px] leading-6 font-bold text-[#00e5ff]">
            <span className="font-medium">创业板指</span> 399006
          </h2>
          <div className={`border ${red}`}>
            <div className={`flex h-[23px] items-center border-b pr-[3px] pl-px ${red}`}>
              <span className="text-base leading-4 text-[#c0c0c0]">委比</span>
              <span className="flex-1 pr-[54px]"><Num t="r" v="+62.13%" /></span>
              <Num t="r" v="+1289039" />
            </div>
            <div className={`grid auto-rows-[21px] grid-cols-2 border-b ${red}`}>
              {quoteRows.map(([label, t, v, unit]) => (
                <Cell key={label} label={label}><Num t={t} v={v} unit={unit} /></Cell>
              ))}
            </div>
            <div className={`grid auto-rows-[33px] border-b ${red}`}>
              <Cell label="总市值"><Num t="c" v="55899" unit="亿" /></Cell>
              <Cell label="流通市值"><Num t="c" v="32074" unit="亿" /></Cell>
            </div>
            <div className={`grid h-[238px] grid-cols-2 border-b ${red}`}>
              <div className={`grid grid-rows-6 border-r ${red}`}>
                {statLeft.map(([label, t, v, unit]) => (
                  <Cell key={label} label={label}><Num t={t} v={v} unit={unit} /></Cell>
                ))}
              </div>
              <div className="grid grid-rows-6">
                {statRight.map(([label, t, v, unit]) => (
                  <Cell key={label} label={label}><Num t={t} v={v} unit={unit} /></Cell>
                ))}
              </div>
            </div>
            <div className="flex h-4 items-end justify-between pl-0.5 leading-4">
              <span className="text-base leading-4 text-[#c0c0c0]">现价</span>
              <span className="text-[#00e600]">2714.05</span>
              <span className="text-[#c0c0c0]">2015-12-31,<span className="text-sm leading-4">四</span></span>
            </div>
            <div className="flex h-[103px]">
              <div className="flex w-[43px] flex-col items-end gap-[11px] pr-0.5 leading-3">
                <span className="text-[#ff3232]">2860</span>
                <span className="text-white">2780</span>
                <span className="text-[#00e600]">2702</span>
                <span className="text-[#00e5ff]">3644</span>
                <span className={`-mt-1 border leading-[13px] text-[#00e5ff] ${red}`}>X100</span>
              </div>
              <IntradayChart />
              <div className="flex flex-col gap-[11px] pl-px leading-3">
                <span className="text-[#ff3232]">2.91%</span>
                <span className="text-white">0.00%</span>
              </div>
            </div>
          </div>
          <div className="flex h-[17px] pl-px text-[#222]">
            <button className={`${tabShape} bg-[#800000] px-[10px] text-white`}>分时</button>
            <button className={`${tabShape} bg-[#999] px-[7px]`}>筹码</button>
            <button className={`${tabShape} bg-[#999] px-[8px]`}>火焰</button>
          </div>

          <div className="absolute top-[523px] right-[3px] z-10 flex w-[126px] items-center">
            <div className="z-10 flex size-[47px] items-center justify-center rounded-full border-2 border-[#e8e8e8] bg-linear-to-b from-[#2c9458] from-25% to-[#54cc68] to-26% text-[15px] text-white shadow-[0_0_2px_#444]">73%</div>
            <div className="-ml-6 flex h-[38px] flex-1 items-center justify-end gap-1.5 rounded-r-full bg-linear-to-b from-[#fafafa] to-[#d4d4d4] pr-1.5">
              <div className="flex flex-col gap-[3px] text-[10px] leading-3 text-[#222]">
                <span className="flex items-center gap-5">
                  <svg className="h-2 w-[7px]" viewBox="0 0 7 8"><path d="M3.500 8V1.500M.8 4L3.500 1.200L6.200 4" stroke="#e85038" strokeWidth="1.500" fill="none" /></svg>
                  0K/s
                </span>
                <span className="flex items-center gap-5">
                  <svg className="h-2 w-[7px]" viewBox="0 0 7 8"><path d="M3.500 0V6.500M.8 4L3.500 6.800L6.200 4" stroke="#209848" strokeWidth="1.500" fill="none" /></svg>
                  0K/s
                </span>
              </div>
              <svg className="h-[19px] w-[18px]" viewBox="0 0 18 19">
                <circle cx="8.500" cy="10" r="8.300" fill="#2c78d4" /><path d="M8.500 5.500v9M4 10h9" stroke="#fff" strokeWidth="2" />
                <circle cx="14" cy="4" r="3.700" fill="#d83028" />
              </svg>
            </div>
          </div>
        </aside>
      </main>

      <footer>
        <div className={`grid h-5 grid-cols-[322fr_334fr_339fr_367fr] border-t ${red}`}>
          <div className={`flex items-center border-r ${red}`}>
            <span className="w-4 text-base leading-4 text-[#ffff99]">沪</span>
            <span className="w-[73px]"><Num t="g" v="3539.18" /></span>
            <span className="w-[74px]"><Num t="g" v="-33.70" /></span>
            <span className="w-[65px]"><Num t="g" v="-0.94%" /></span>
            <span className="flex-1"><Num t="c" v="2540" unit="亿" /></span>
          </div>
          <div className={`flex items-center border-r ${red}`}>
            <span className="w-4 text-base leading-4 text-[#ffff99]">深</span>
            <span className="w-[83px]"><Num t="g" v="12664.89" /></span>
            <span className="w-[77px]"><Num t="g" v="-224.95" /></span>
            <span className="w-[68px]"><Num t="g" v="-1.75%" /></span>
            <span className="flex-1"><Num t="c" v="4326" unit="亿" /></span>
          </div>
          <div className={`flex items-center border-r ${red}`}>
            <span className="w-4 text-base leading-4 text-[#ffff99]">创</span>
            <span className="w-[85px]"><Num t="g" v="2714.05" /></span>
            <span className="w-[67px]"><Num t="g" v="-65.47" /></span>
            <span className="w-[69px]"><Num t="g" v="-2.36%" /></span>
            <span className="flex-1"><Num t="c" v="1119" unit="亿" /></span>
          </div>
          <div className="flex items-center pl-px">
            <span className="w-16 text-base leading-4 text-[#ffff99]">恒生指数</span>
            <span className="w-[119px]"><Num t="r" v="21914.40" /></span>
            <span className="w-[58px]"><Num t="r" v="+32.25" /></span>
            <span className="w-[90px]"><Num t="r" v="+0.15%" /></span>
            <Wrench className="mr-1 ml-auto size-[13px] -scale-x-100 fill-[#888] text-[#888]" />
          </div>
        </div>
        <div className={`flex h-[19px] items-stretch border-y whitespace-nowrap text-[#c0c0c0] ${red}`}>
          <div className="flex gap-px">
            {["手机", "留言", "客服", "解盘", "股市日记", "股灵通", "行情", "24小时滚动"].map((t) => (
              <button key={t} className={`border-r px-[3px] leading-4 ${red}`}>{t}</button>
            ))}
          </div>
          <div className="flex min-w-0 flex-1 gap-[70px] overflow-hidden pl-[314px] text-[13px] leading-4 font-bold text-[#ffff00]">
            <span>22:54 越南央行将设定每日越南盾兑美元参考汇率</span>
            <span>提醒：谨慎升级Windows</span>
          </div>
          <label className="flex w-[163px] items-center bg-[#c0c0c0] pr-1">
            <input aria-label="搜索" placeholder="代码/名称/简拼/功能" className="w-full min-w-0 bg-transparent pl-1.5 text-xs leading-4 text-black outline-none placeholder:text-black" />
            <Search className="size-3 shrink-0 -scale-x-100 text-[#666]" />
          </label>
          <time className="w-[67px] text-center font-['Open_Sans',sans-serif] text-[13px] leading-[17px] font-bold text-[#c0d0e0]">23:28:00</time>
        </div>
      </footer>
    </div>
  );
}
